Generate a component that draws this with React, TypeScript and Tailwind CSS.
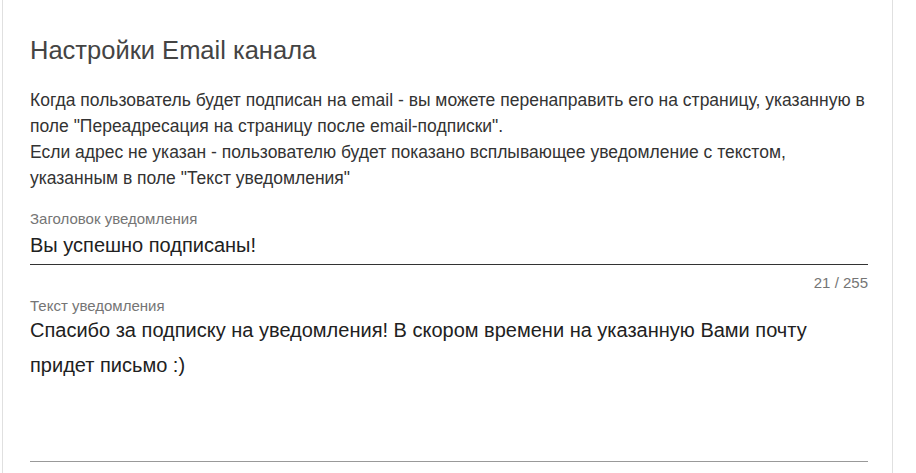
export default function App() {
  return (
    <div className="h-[473px] overflow-hidden bg-white font-['Liberation_Sans',Arial,sans-serif]">
      <div className="ml-[2px] h-full w-[891px] border-x border-[#e0e0e0] pl-[27px] pr-[20px] pt-[35px]">
        <h2 className="text-[25.5px] leading-[30px] text-[#444]">Настройки Email канала</h2>

        <div className="mt-[22px] text-[17.5px] leading-[26px] text-[#333]">
          <p>
            Когда пользователь будет подписан на email - вы можете перенаправить его на страницу, указанную в
            <br />
            поле "Переадресация на страницу после email-подписки".
          </p>
          <p>
            Если адрес не указан - пользователю будет показано всплывающее уведомление с текстом,
            <br />
            указанным в поле "Текст уведомления"
          </p>
        </div>

        <div className="mt-[19px] pr-[4px]">
          <label className="block text-[15px] leading-[18px] text-[#757575]">Заголовок уведомления</label>
          <div className="border-b border-[#333] pb-[7px] pt-[5px] text-[20px] leading-[24px] text-[#212121]">
            Вы успешно подписаны!
          </div>
          <div className="mt-[9px] text-right text-[15px] leading-[18px] text-[#757575]">21 / 255</div>
        </div>

        <div className="mt-[6px] pr-[4px]">
          <label className="block text-[15px] leading-[16px] text-[#757575]">Текст уведомления</label>
          <div className="-mt-[1px] h-[149px] border-b border-[#999] text-[20px] leading-[35px] text-[#212121]">
            Спасибо за подписку на уведомления! В скором времени на указанную Вами почту
            <br />
            придет письмо :)
          </div>
        </div>
      </div>
    </div>
  );
}
